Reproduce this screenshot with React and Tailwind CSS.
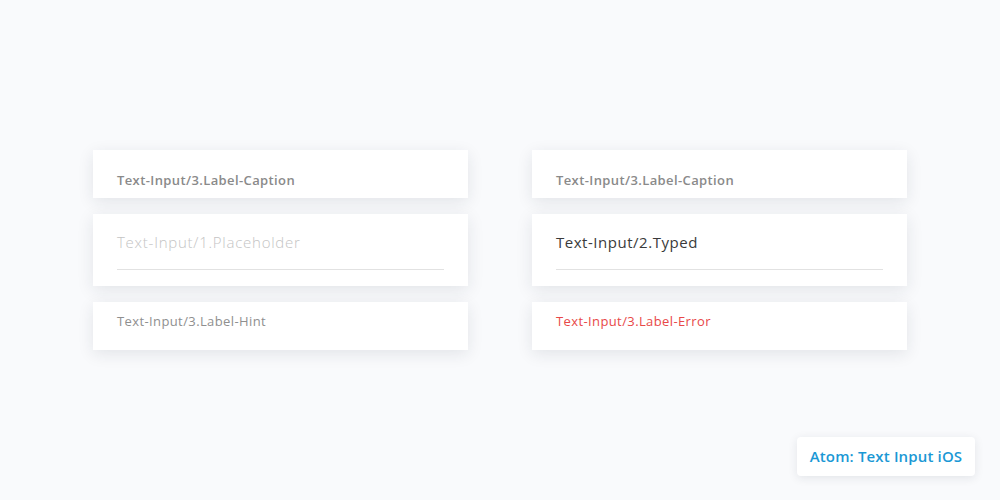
const font = { fontFamily: '"Open Sans", "Lato", sans-serif' };

const Card = ({ className, children }) => (
  <div className={`bg-white w-[375px] shadow-[0_4px_16px_rgba(30,40,60,0.10)] px-6 ${className}`}>
    {children}
  </div>
);

const Column = ({ typed }) => (
  <div className="flex flex-col gap-4">
    <Card className="h-12 pt-[22px]">
      <p className="text-[13px] leading-4 font-semibold tracking-[0.03em] text-[#8a8a8a]">Text-Input/3.Label-Caption</p>
    </Card>
    <Card className="h-[72px] pt-[18px]">
      <p
        className={`text-[15px] leading-5 ${
          typed ? 'text-[#3a3a3a] tracking-[0.035em]' : 'text-[#c4c4c4] font-light tracking-[0.05em]'
        }`}
      >
        {typed ? 'Text-Input/2.Typed' : 'Text-Input/1.Placeholder'}
      </p>
      <div className="mt-[17px] h-px bg-[#e2e2e2]" />
    </Card>
    <Card className="h-12 pt-[11px]">
      <p className={`text-[13px] leading-4 tracking-[0.03em] ${typed ? 'text-[#e84848]' : 'text-[#8f8f8f]'}`}>
        {typed ? 'Text-Input/3.Label-Error' : 'Text-Input/3.Label-Hint'}
      </p>
    </Card>
  </div>
);

export default function App() {
  return (
    <div className="w-[1000px] h-[500px] bg-[#f9fafc] flex flex-col" style={font}>
      <div className="flex gap-16 pl-[93px] pt-[150px]">
        <Column />
        <Column typed />
      </div>
      <div className="flex justify-end pr-[25px] mt-[87px]">
        <div className="h-[39px] w-[178px] bg-white rounded shadow-[0_2px_10px_rgba(30,40,60,0.10)] flex items-center justify-center">
          <span className="text-[15px] font-semibold tracking-[0.01em] text-[#1a98d5]">Atom: Text Input iOS</span>
        </div>
      </div>
    </div>
  );
}
